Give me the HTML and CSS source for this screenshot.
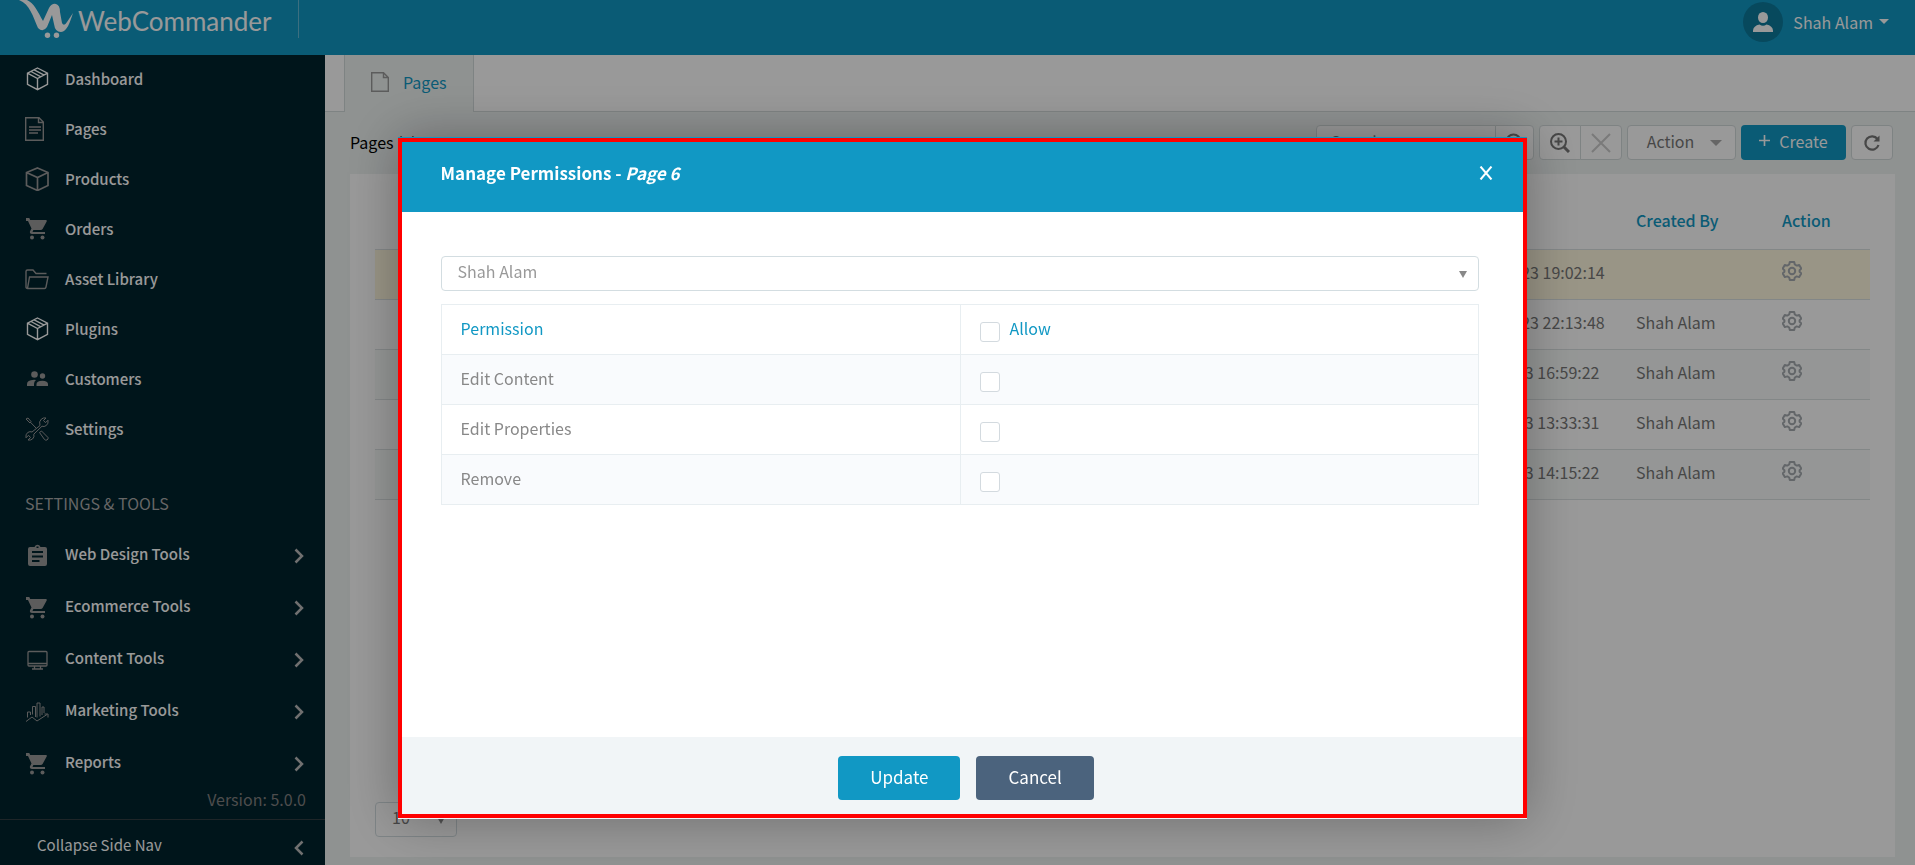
FILE: index.html
```html
<!DOCTYPE html>
<html lang="en">
<head>
    <meta charset="UTF-8">
    <meta name="viewport" content="width=device-width, initial-scale=1.0">
    <title>WebCommander - Pages</title>
    <link rel="stylesheet" href="styles.css">
</head>
<body>
    <svg class="sprite" aria-hidden="true">
        <symbol id="box" viewBox="0 0 24 24"><path d="M12.500 1 22.500 6.200V17.300L12.500 22.700 2.500 17.300V6.200ZM2.500 6.200 12.500 11.500 22.500 6.200M12.500 11.500V22.700M6 4.500 16 9.800M9.200 2.900 19.200 8.100" fill="none" stroke="currentColor" stroke-width="1.400"/></symbol>
        <symbol id="cube" viewBox="0 0 24 24"><path d="M12.500 1 23 5.500V18.500L12.500 23.500 1.500 18.500V5.500ZM1.500 5.500 12.500 10.500 23 5.500M12.500 10.500V23.500" fill="none" stroke="currentColor" stroke-width="1.700"/></symbol>
        <symbol id="doc" viewBox="0 0 24 24"><path d="M.7.700H14L18.300 5V23.300H.700ZM13.500 1V5.500H18M4 10H16M4 13H16M4 16H13" fill="none" stroke="currentColor" stroke-width="1.400"/></symbol>
        <symbol id="cart" viewBox="0 0 24 24"><path d="M1 2V4H3L6.500 11.500 5 14.200C4.500 15.500 5.300 17 7 17H20V15H7.500L8.400 13H15.600Q17 13 17.600 12L21.700 4.500Q22.300 3 21 3H5.200L4.300 1H1Z" fill="currentColor"/><circle cx="7" cy="20.500" r="2" fill="currentColor"/><circle cx="17.500" cy="20.500" r="2" fill="currentColor"/></symbol>
        <symbol id="folder" viewBox="0 0 24 24"><path d="M2.500 21.500Q1 21.500 1 20V4.500Q1 3 2.500 3H8L11 6.500H21.500M2.500 21.500 4.500 10H23L21 20Q20.700 21.500 19.500 21.500Z" fill="none" stroke="currentColor" stroke-width="1.400"/></symbol>
        <symbol id="people" viewBox="0 0 24 24"><circle cx="9.500" cy="7.500" r="3.300"/><circle cx="17.500" cy="9" r="2.700"/><path d="M2 19V17Q2 13 9 12.700L11 13Q9 14.500 9 17V19ZM11.500 19V17Q11.500 14 17.300 13.700 23 14 23 17V19Z"/></symbol>
        <symbol id="tools" viewBox="0 0 24 24"><path d="M15 8.500Q13.500 4.500 16.500 2 18.500.400 21 1L18.500 3.500 20.500 5.700 23 3.200Q23.700 6.500 21.300 8.500 19 10.200 17 9.200L8.800 17.200Q9.700 20 7.500 22 5.500 23.500 3 23L5.500 20.500 3.500 18.300 1 20.800Q.3 17.500 2.700 15.500 5 14 7 15ZM1 2 3 1 6 4.500 5 6ZM5.500 5.300 11 11M14.500 15.500 16.500 14 23 20.500Q23.500 22 22 23 20.500 23.500 19.500 22.500Z" fill="none" stroke="currentColor"/></symbol>
        <symbol id="clip" viewBox="0 0 24 24"><path fill-rule="evenodd" d="M5 3H9.500Q10.500.8 12.500.8T15.500 3H20Q22 3 22 5V20Q22 22 20 22H5Q3 22 3 20V5Q3 3 5 3ZM7 7V9H18V7ZM7 11.500V13.500H18V11.500ZM7 16V18H14.500V16ZM11.500 2.500V4H13.500V2.500Z"/></symbol>
        <symbol id="monitor" viewBox="0 0 24 24"><path d="M4 3.500H21Q22 3.500 22 4.500V17Q22 18 21 18H4Q3 18 3 17V4.500Q3 3.500 4 3.500ZM3 15.500H22M9.500 18V20.500M15.500 18V20.500M7 21H18" fill="none" stroke="currentColor" stroke-width="1.300"/></symbol>
        <symbol id="chart" viewBox="0 0 24 24"><path d="M1 21.500 7 17 12 21 22 14.500M19.500 14H23V17.500M2.500 17.500V12H5.500V15M7.500 14.500V6.500H10.500V17M12 17.500V3H15V16.500M17 15V7H19V13" fill="none" stroke="currentColor"/></symbol>
        <symbol id="right" viewBox="0 0 10 16"><path d="M1.500 1.500 8 8 1.500 14.500" fill="none" stroke="currentColor" stroke-width="2.500"/></symbol>
        <symbol id="gear" viewBox="0 0 20 20"><path d="M7.800 1H12.200L12.800 3.500 14.700 4.600 17.200 3.900 19.300 7.600 17.600 9.300V10.700L19.300 12.400 17.200 16.100 14.700 15.400 12.800 16.500 12.200 19H7.800L7.200 16.500 5.300 15.400 2.800 16.100.700 12.400 2.400 10.700V9.300L.700 7.600 2.800 3.900 5.300 4.600 7.200 3.500Z" fill="none" stroke="currentColor" stroke-width="2" stroke-linejoin="round"/><circle cx="10" cy="10" r="3.200" fill="none" stroke="currentColor" stroke-width="2"/></symbol>
    </svg>

    <div class="app">
        <header class="topbar">
            <a class="logo" href="#">
                <svg class="logo-mark" viewBox="0 0 54 38" aria-hidden="true"><path d="M0 0H8C15 3 19 12 24 21L30 8Q33 3 37 4T41 12L43 23Q45 27 48 22L54 13C51 22 48 32 42 32Q36 32 35 24L33 15 28 27Q24 33 19 28C14 17 11 4 0 0Z"/><circle cx="28.500" cy="35.200" r="2.700"/><circle cx="37.500" cy="35.200" r="2.700"/></svg>
                <span>WebCommander</span>
            </a>
            <button class="user" type="button">
                <span class="avatar"><svg viewBox="0 0 20 20" aria-hidden="true"><ellipse cx="10" cy="5.500" rx="5" ry="5.500"/><path d="M0 20Q-.5 14 6.500 12.500 10 15 13.500 12.500 20.500 14 20 20Z"/></svg></span>
                Shah Alam
                <span class="caret"></span>
            </button>
        </header>

        <div class="layout">
            <nav class="sidebar">
                <ul class="menu">
                    <li><a href="#"><svg class="bright"><use href="#box"/></svg>Dashboard</a></li>
                    <li><a href="#"><svg><use href="#doc"/></svg>Pages</a></li>
                    <li><a href="#"><svg><use href="#cube"/></svg>Products</a></li>
                    <li><a href="#"><svg><use href="#cart"/></svg>Orders</a></li>
                    <li><a href="#"><svg><use href="#folder"/></svg>Asset Library</a></li>
                    <li><a href="#"><svg class="bright"><use href="#box"/></svg>Plugins</a></li>
                    <li><a href="#"><svg><use href="#people"/></svg>Customers</a></li>
                    <li><a href="#"><svg><use href="#tools"/></svg>Settings</a></li>
                </ul>
                <h2 class="menu-title">SETTINGS &amp; TOOLS</h2>
                <ul class="menu menu-tools">
                    <li><a href="#"><svg><use href="#clip"/></svg>Web Design Tools<svg class="chevron"><use href="#right"/></svg></a></li>
                    <li><a href="#"><svg><use href="#cart"/></svg>Ecommerce Tools<svg class="chevron"><use href="#right"/></svg></a></li>
                    <li><a href="#"><svg><use href="#monitor"/></svg>Content Tools<svg class="chevron"><use href="#right"/></svg></a></li>
                    <li><a href="#"><svg><use href="#chart"/></svg>Marketing Tools<svg class="chevron"><use href="#right"/></svg></a></li>
                    <li><a href="#"><svg><use href="#cart"/></svg>Reports<svg class="chevron"><use href="#right"/></svg></a></li>
                </ul>
                <p class="version">Version: 5.0.0</p>
                <button class="collapse" type="button">Collapse Side Nav<svg class="chevron flip"><use href="#right"/></svg></button>
            </nav>

            <main class="content">
                <div class="tabs">
                    <a class="tab" href="#"><svg viewBox="0 0 18 20" aria-hidden="true"><path d="M.7.700H12.500L17.300 5.500V19.300H.700ZM12.500.700V5.500H17.300" fill="none" stroke="currentColor" stroke-width="1.400"/></svg>Pages</a>
                </div>
                <div class="toolbar">
                    <h1>Pages (5)</h1>
                    <div class="group">
                        <input class="search" type="text" placeholder="Search" aria-label="Search">
                        <button class="tool search-btn" type="button" aria-label="Search pages"><svg viewBox="0 0 20 20"><path d="M12.500 12.500 19 19" stroke-width="3"/><circle cx="8.500" cy="8.500" r="7"/></svg></button>
                    </div>
                    <div class="group">
                        <button class="tool" type="button" aria-label="Advanced search"><svg viewBox="0 0 20 20"><path d="M13.500 13.500 19 19" stroke-width="3"/><circle cx="8.500" cy="8.500" r="7.500"/><path d="M8.500 4.500V12.500M4.500 8.500H12.500"/></svg></button>
                        <button class="tool clear" type="button" aria-label="Clear search"><svg viewBox="0 0 20 20"><path d="M1 1 19 19M19 1 1 19"/></svg></button>
                    </div>
                    <button class="tool action" type="button">Action<span class="caret"></span></button>
                    <button class="create" type="button"><svg viewBox="0 0 10 10" aria-hidden="true"><path d="M5 0V10M0 5H10"/></svg>Create</button>
                    <button class="tool" type="button" aria-label="Refresh"><svg viewBox="0 0 20 20"><path d="M15.500 6A6.700 6.700 0 1 0 16.500 12" stroke-width="2.200"/><path d="M17.500 2.500V8.500H11.500Z" fill="currentColor" stroke="none"/></svg></button>
                </div>
                <section class="panel">
                    <table class="pages-table">
                        <thead>
                            <tr><th></th><th class="col-date"></th><th class="col-user">Created By</th><th class="col-action">Action</th></tr>
                        </thead>
                        <tbody>
                            <tr class="highlight"><td></td><td>Jun 25, 2023 19:02:14</td><td></td><td><button class="gear" type="button" aria-label="Actions"><svg><use href="#gear"/></svg></button></td></tr>
                            <tr><td></td><td>Jun 24, 2023 22:13:48</td><td>Shah Alam</td><td><button class="gear" type="button" aria-label="Actions"><svg><use href="#gear"/></svg></button></td></tr>
                            <tr><td></td><td>Jul 23, 2023 16:59:22</td><td>Shah Alam</td><td><button class="gear" type="button" aria-label="Actions"><svg><use href="#gear"/></svg></button></td></tr>
                            <tr><td></td><td>Jul 20, 2023 13:33:31</td><td>Shah Alam</td><td><button class="gear" type="button" aria-label="Actions"><svg><use href="#gear"/></svg></button></td></tr>
                            <tr><td></td><td>Jul 18, 2023 14:15:22</td><td>Shah Alam</td><td><button class="gear" type="button" aria-label="Actions"><svg><use href="#gear"/></svg></button></td></tr>
                        </tbody>
                    </table>
                    <div class="select-wrap page-size">
                        <select aria-label="Rows per page"><option>10</option></select>
                    </div>
                </section>
            </main>
        </div>
    </div>

    <div class="overlay">
        <div class="modal" role="dialog" aria-labelledby="modalTitle">
            <div class="modal-header">
                <h2 id="modalTitle">Manage Permissions - <em>Page 6</em></h2>
                <button class="close" type="button" aria-label="Close"><svg viewBox="0 0 14 14"><path d="M1.500.500 12.500 13.500M12.500.500 1.500 13.500"/></svg></button>
            </div>
            <div class="modal-body">
                <div class="select-wrap">
                    <select aria-label="User"><option>Shah Alam</option></select>
                </div>
                <table class="permissions">
                    <thead>
                        <tr><th>Permission</th><th><label><input type="checkbox">Allow</label></th></tr>
                    </thead>
                    <tbody>
                        <tr><td><label for="editContent">Edit Content</label></td><td><input type="checkbox" id="editContent"></td></tr>
                        <tr><td><label for="editProperties">Edit Properties</label></td><td><input type="checkbox" id="editProperties"></td></tr>
                        <tr><td><label for="remove">Remove</label></td><td><input type="checkbox" id="remove"></td></tr>
                    </tbody>
                </table>
            </div>
            <div class="modal-footer">
                <button class="btn" type="button">Update</button>
                <button class="btn btn-cancel" type="button">Cancel</button>
            </div>
        </div>
    </div>
</body>
</html>
```
FILE: styles.css
```css
* {
    margin: 0;
    padding: 0;
    box-sizing: border-box;
}

body {
    font-family: "Noto Sans CJK SC", "Noto Sans", sans-serif;
    font-size: 16px;
    line-height: 20px;
    color: #777;
    overflow: hidden;
}

button,
input,
select {
    font: inherit;
    color: inherit;
}

button {
    background: none;
    border: none;
    cursor: pointer;
}

a {
    color: inherit;
    text-decoration: none;
}

ul {
    list-style: none;
}

.sprite {
    display: none;
}

.app {
    display: flex;
    flex-direction: column;
    min-height: 100vh;
}

/* top bar */
.topbar {
    display: flex;
    justify-content: space-between;
    align-items: flex-start;
    height: 55px;
    padding: 0 26px 0 19px;
    background: #1198c4;
    color: #fff;
}

.logo {
    display: flex;
    gap: 5px;
    height: 38px;
    padding-right: 27px;
    border-right: 1px solid #64b9d6;
    font-family: Lato, sans-serif;
    font-size: 26px;
    line-height: 42px;
}

.logo-mark {
    width: 54px;
    height: 38px;
    fill: #fff;
}

.user {
    display: flex;
    align-items: center;
    gap: 6px;
    height: 44px;
    padding-bottom: 1px;
}

.avatar {
    display: flex;
    justify-content: center;
    align-items: center;
    width: 40px;
    height: 40px;
    margin-right: 4px;
    border-radius: 50%;
    background: #0d7a9c;
}

.avatar svg {
    width: 20px;
    height: 20px;
    fill: #fff;
}

.caret {
    border: 5px solid transparent;
    border-top-color: currentColor;
    border-bottom: none;
}

.layout {
    display: flex;
    flex: 1;
}

/* side navigation */
.sidebar {
    display: flex;
    flex-direction: column;
    width: 325px;
    background: #00232d;
    color: #fff;
}

.menu a {
    display: flex;
    align-items: center;
    gap: 16px;
    height: 50px;
    padding: 0 21px 2px 25px;
    font-size: 15px;
    font-weight: 500;
}

.menu svg {
    width: 24px;
    height: 24px;
    color: #999;
    fill: currentColor;
}

.menu .bright {
    color: #fff;
}

.menu-tools a {
    height: 52px;
}

.menu-tools svg {
    margin-top: 4px;
}

.menu-title {
    padding: 38px 25px 16px;
    font-size: 16px;
    font-weight: 400;
    color: #aaa;
}

.sidebar .chevron {
    width: 10px;
    height: 16px;
    margin-left: auto;
    color: #bbb;
}

.sidebar .flip {
    margin-top: 6px;
    transform: rotate(180deg);
}

.version {
    padding-right: 19px;
    text-align: right;
    color: #808080;
}

.collapse {
    display: flex;
    align-items: center;
    margin-top: auto;
    height: 46px;
    padding: 5px 21px 0 37px;
    border-top: 1px solid #333f44;
    font-size: 15px;
}

/* pages list */
.content {
    display: flex;
    flex-direction: column;
    flex: 1;
    min-width: 0;
    background: #eef3f2;
}

.tabs {
    display: flex;
    height: 57px;
    padding-left: 19px;
    background: #fff;
    border-bottom: 1px solid #d3dadb;
}

.tab {
    display: flex;
    align-items: center;
    gap: 14px;
    height: 57px;
    padding: 0 26px 3px;
    background: #eef3f2;
    border: solid #d3dadb;
    border-width: 0 1px;
    color: #1198c4;
}

.tab svg {
    width: 18px;
    height: 20px;
    color: #999;
}

.toolbar {
    display: flex;
    align-items: center;
    gap: 5px;
    padding: 13px 22px 14px 25px;
}

.toolbar h1 {
    margin-right: auto;
    padding-bottom: 2px;
    font-size: 16px;
    font-weight: 400;
    color: #000;
}

.group {
    display: flex;
}

.search {
    width: 180px;
    height: 35px;
    padding: 0 14px 4px;
    border: 1px solid #d3dadb;
    border-radius: 4px 0 0 4px;
    background: #fff;
}

.search::placeholder {
    color: #777;
}

.tool {
    display: flex;
    justify-content: center;
    align-items: center;
    width: 42px;
    height: 35px;
    background: #fff;
    border: 1px solid #d3dadb;
    border-radius: 4px;
}

.tool svg {
    width: 20px;
    height: 20px;
    fill: none;
    stroke: currentColor;
    stroke-width: 2;
}

.group .tool:first-child {
    border-radius: 4px 0 0 4px;
}

.group .tool:last-child {
    margin-left: -1px;
    border-radius: 0 4px 4px 0;
}

.group .search-btn {
    width: 39px;
}

.clear {
    color: #ccc;
}

.action {
    gap: 16px;
    width: 109px;
    padding: 0 0 4px 6px;
}

.action .caret {
    margin-top: 4px;
    color: #aaa;
    border-width: 6px 6px 0;
}

.create {
    display: flex;
    justify-content: center;
    align-items: center;
    gap: 9px;
    width: 105px;
    height: 35px;
    padding-bottom: 4px;
    border-radius: 4px;
    background: #1198c4;
    color: #fff;
}

.create svg {
    width: 11px;
    height: 11px;
    stroke: #fff;
    stroke-width: 1.500;
}

.panel {
    display: flex;
    flex-direction: column;
    flex: 1;
    margin: 0 20px 8px 25px;
    padding: 20px 25px;
    background: #fff;
}

.pages-table {
    width: 100%;
    table-layout: fixed;
    border-collapse: collapse;
    text-align: left;
}

.pages-table th {
    height: 55px;
    padding-bottom: 2px;
    font-weight: 500;
    color: #1198c4;
}

.pages-table td {
    height: 50px;
    padding-bottom: 4px;
    border-top: 1px solid #dbe1e2;
    border-bottom: 1px solid #dbe1e2;
}

.pages-table td:last-child {
    padding-bottom: 6px;
}

.pages-table tbody tr:nth-child(odd) {
    background: #f8fbfa;
}

.pages-table .highlight:nth-child(odd) {
    background: #fff8df;
}

.col-date {
    width: 190px;
}

.col-user {
    width: 146px;
}

.col-action {
    width: 88px;
}

.gear,
.gear svg {
    display: block;
    width: 20px;
    height: 20px;
    color: #a5abb0;
}

.select-wrap {
    position: relative;
}

.select-wrap select {
    appearance: none;
    width: 100%;
    height: 35px;
    padding: 0 16px 5px;
    border: 1px solid #d3dde1;
    border-radius: 4px;
    background: #fff;
}

.select-wrap::after {
    content: "";
    position: absolute;
    right: 12px;
    top: 15px;
    border: 4px solid transparent;
    border-top: 7px solid #888;
    border-bottom: none;
    pointer-events: none;
}

.page-size {
    width: 82px;
    margin-top: auto;
}

/* permissions dialog */
.overlay {
    position: fixed;
    inset: 0;
    display: flex;
    justify-content: center;
    align-items: flex-start;
    padding: 137px 0 0 10px;
    background: rgba(0, 0, 0, 0.4);
}

.modal {
    position: relative;
    width: 59vw;
    background: #fff;
    box-shadow: 0 0 50px rgba(0, 0, 0, 0.3);
}

.modal::after {
    content: "";
    position: absolute;
    inset: 1px 0;
    border: 4px solid #f00;
    pointer-events: none;
}

.modal-header {
    display: flex;
    justify-content: space-between;
    align-items: center;
    height: 75px;
    padding: 0 34px 4px 43px;
    background: #1198c4;
    color: #fff;
}

.modal-header h2 {
    font-size: 17px;
    font-weight: 700;
}

.close svg {
    display: block;
    width: 14px;
    height: 14px;
    fill: none;
    stroke: #fff;
    stroke-width: 2;
}

.modal-body {
    min-height: 525px;
    padding: 44px 48px 44px 43px;
}

.modal-body select {
    color: #999;
}

.permissions {
    width: 100%;
    margin-top: 13px;
    table-layout: fixed;
    border-collapse: collapse;
    text-align: left;
    color: #888;
}

.permissions th,
.permissions td {
    height: 50px;
    padding: 0 18px 3px 19px;
    border: 1px solid #e8eef1;
}

.permissions th {
    font-weight: 400;
    color: #1198c4;
}

.permissions tbody tr:nth-child(odd) {
    background: #f9fbfd;
}

.permissions input {
    appearance: none;
    display: block;
    width: 20px;
    height: 20px;
    margin-top: 7px;
    border: 1px solid #d3dadf;
    border-radius: 3px;
    background: #fff;
}

.permissions th label {
    display: flex;
    align-items: center;
    gap: 10px;
}

.modal-footer {
    display: flex;
    justify-content: center;
    gap: 16px;
    padding: 19px 0 19px 7px;
    background: #f1f5f7;
}

.btn {
    height: 44px;
    padding: 0 32px 2px;
    border-radius: 4px;
    background: #1198c4;
    color: #fff;
    font-size: 17px;
}

.btn-cancel {
    background: #4b637d;
}
```
